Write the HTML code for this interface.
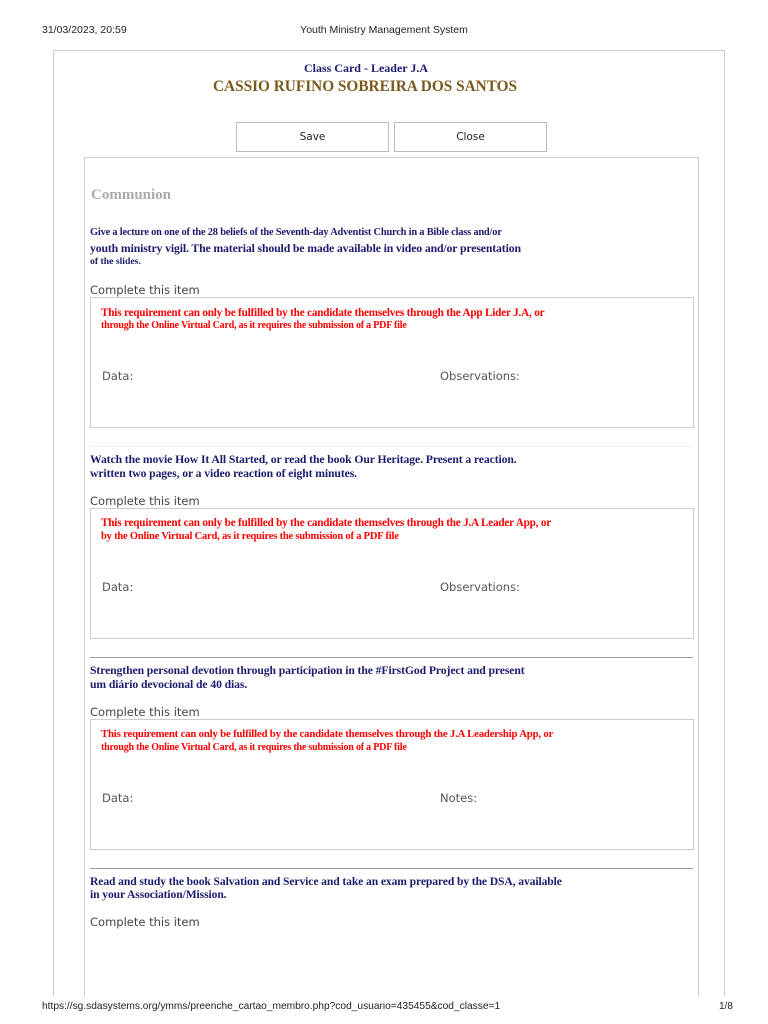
<!DOCTYPE html>
<html><head><meta charset="utf-8"><style>
*{margin:0;padding:0;box-sizing:border-box}
body{width:768px;height:1024px;background:#fff;position:relative;overflow:hidden;font-family:"Liberation Sans",sans-serif}
.a{position:absolute;white-space:nowrap;line-height:1}
.s{font-family:"Liberation Serif",serif;font-weight:bold;color:#1c1c6e}
.r{font-family:"Liberation Serif",serif;font-weight:bold;color:#f00;font-size:11.2px;letter-spacing:-0.2px}
.v{font-family:"DejaVu Sans",sans-serif;font-size:11.5px;color:#444}
.box{position:absolute;border:1px solid #ccc}
.btn{position:absolute;border:1px solid #bbb;font-family:"DejaVu Sans",sans-serif;font-size:10.5px;color:#222;text-align:center;line-height:28px;height:30px;width:153px}
.hr{position:absolute;left:90px;width:603px}
</style></head><body>
<div class="a" style="left:42px;top:25px;font-size:10.5px;color:#222">31/03/2023, 20:59</div>
<div class="a" style="left:0;width:768px;text-align:center;top:25px;font-size:10.5px;color:#222">Youth Ministry Management System</div>
<div class="a" style="left:42px;top:1002px;font-size:10.2px;color:#222">https://sg.sdasystems.org/ymms/preenche_cartao_membro.php?cod_usuario=435455&amp;cod_classe=1</div>
<div class="a" style="left:719px;top:1002px;font-size:10px;color:#222">1/8</div>

<div class="box" style="left:53px;top:50px;width:672px;height:946px;border-bottom:none"></div>
<div class="a s" style="left:0;width:732px;text-align:center;top:62px;font-size:12px">Class Card - Leader J.A</div>
<div class="a" style="left:0;width:730px;text-align:center;top:79px;font-size:15.3px;font-family:'Liberation Serif',serif;font-weight:bold;color:#7a5a1c">CASSIO RUFINO SOBREIRA DOS SANTOS</div>
<div class="btn" style="left:236px;top:122px">Save</div>
<div class="btn" style="left:394px;top:122px">Close</div>

<div class="box" style="left:84px;top:157px;width:615px;height:840px;border-bottom:none"></div>
<div class="a" style="left:91px;top:188px;font-size:15px;font-family:'Liberation Serif',serif;font-weight:bold;color:#aaa">Communion</div>

<div class="a s" style="left:90px;top:228px;font-size:10.4px;letter-spacing:-0.2px">Give a lecture on one of the 28 beliefs of the Seventh-day Adventist Church in a Bible class and/or</div>
<div class="a s" style="left:90px;top:243px;font-size:11.8px;letter-spacing:-0.15px">youth ministry vigil. The material should be made available in video and/or presentation</div>
<div class="a s" style="left:90px;top:257px;font-size:9.7px">of the slides.</div>
<div class="a v" style="left:90px;top:285px">Complete this item</div>
<div class="box" style="left:90px;top:297px;width:604px;height:131px"></div>
<div class="a r" style="left:101px;top:308px">This requirement can only be fulfilled by the candidate themselves through the App Lider J.A, or</div>
<div class="a r" style="left:101px;top:321px;font-size:10px">through the Online Virtual Card, as it requires the submission of a PDF file</div>
<div class="a v" style="left:102px;top:371px;color:#555">Data:</div>
<div class="a v" style="left:440px;top:371px;color:#555">Observations:</div>

<div class="hr" style="top:446px;border-top:1px solid #eee"></div>
<div class="a s" style="left:90px;top:454px;font-size:11.7px;letter-spacing:-0.1px">Watch the movie How It All Started, or read the book Our Heritage. Present a reaction.</div>
<div class="a s" style="left:90px;top:468px;font-size:11.7px;letter-spacing:-0.1px">written two pages, or a video reaction of eight minutes.</div>
<div class="a v" style="left:90px;top:496px">Complete this item</div>
<div class="box" style="left:90px;top:508px;width:604px;height:131px"></div>
<div class="a r" style="left:101px;top:518px">This requirement can only be fulfilled by the candidate themselves through the J.A Leader App, or</div>
<div class="a r" style="left:101px;top:532px;font-size:10.5px">by the Online Virtual Card, as it requires the submission of a PDF file</div>
<div class="a v" style="left:102px;top:582px;color:#555">Data:</div>
<div class="a v" style="left:440px;top:582px;color:#555">Observations:</div>

<div class="hr" style="top:657px;border-top:1px solid #999"></div>
<div class="a s" style="left:90px;top:665px;font-size:11.7px;letter-spacing:-0.1px">Strengthen personal devotion through participation in the #FirstGod Project and present</div>
<div class="a s" style="left:90px;top:679px;font-size:11.7px;letter-spacing:-0.1px">um diário devocional de 40 dias.</div>
<div class="a v" style="left:90px;top:707px">Complete this item</div>
<div class="box" style="left:90px;top:719px;width:604px;height:131px"></div>
<div class="a r" style="left:101px;top:729px;font-size:10.8px">This requirement can only be fulfilled by the candidate themselves through the J.A Leadership App, or</div>
<div class="a r" style="left:101px;top:743px;font-size:10px">through the Online Virtual Card, as it requires the submission of a PDF file</div>
<div class="a v" style="left:102px;top:793px;color:#555">Data:</div>
<div class="a v" style="left:440px;top:793px;color:#555">Notes:</div>

<div class="hr" style="top:868px;border-top:1px solid #999"></div>
<div class="a s" style="left:90px;top:876px;font-size:11.6px;letter-spacing:-0.1px">Read and study the book Salvation and Service and take an exam prepared by the DSA, available</div>
<div class="a s" style="left:90px;top:889px;font-size:11.6px;letter-spacing:-0.1px">in your Association/Mission.</div>
<div class="a v" style="left:90px;top:917px">Complete this item</div>
</body></html>
